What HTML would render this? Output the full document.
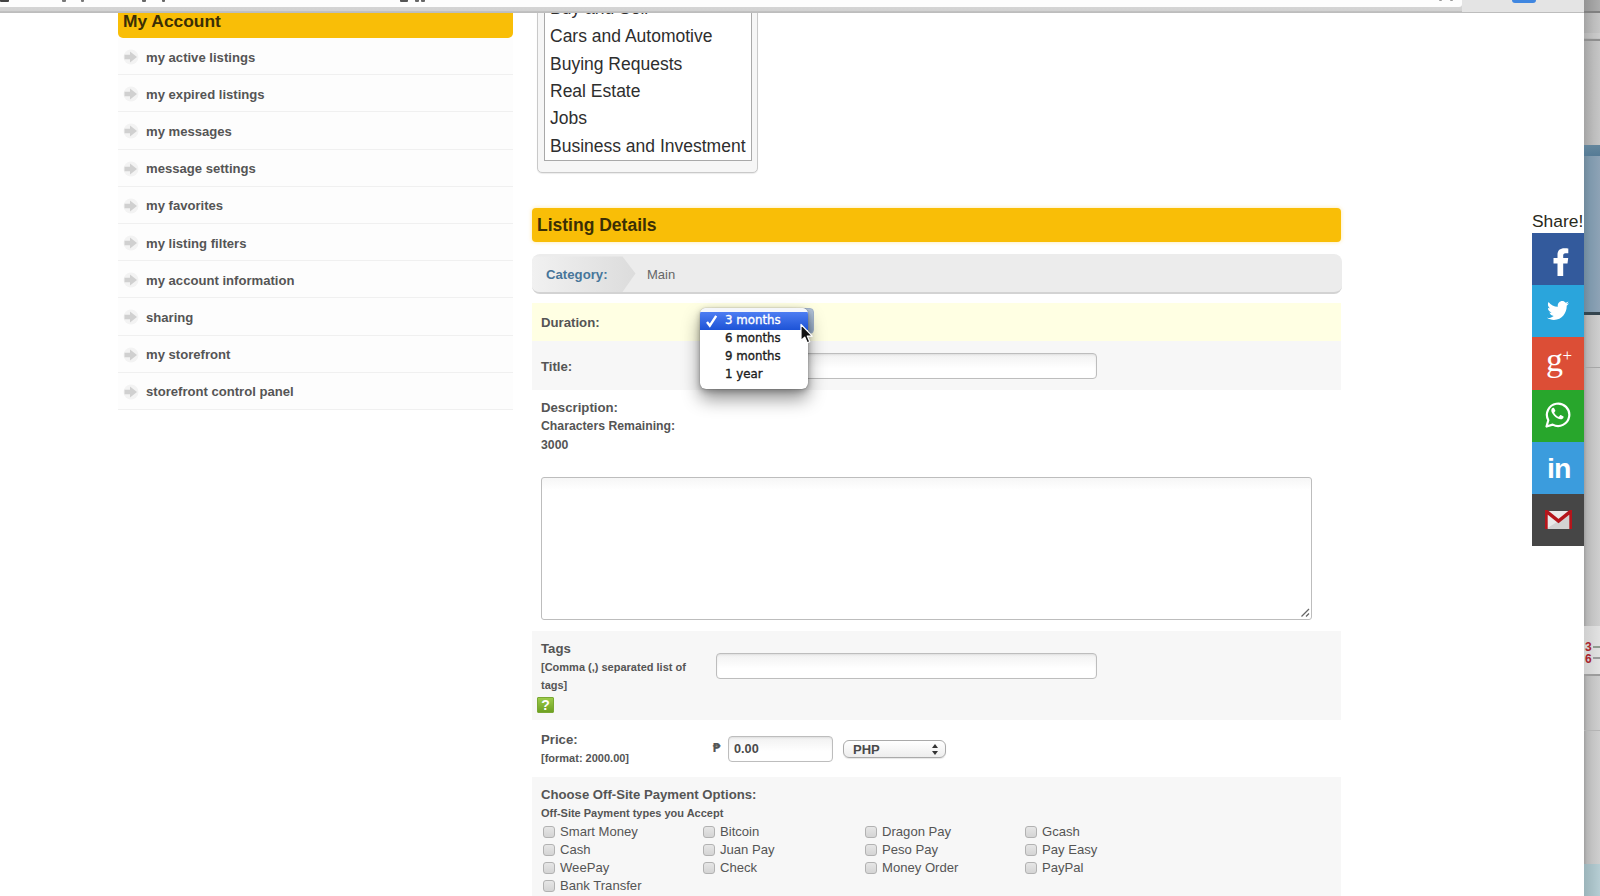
<!DOCTYPE html>
<html lang="en">
<head>
<meta charset="utf-8">
<title>Listing Details</title>
<style>
*{box-sizing:border-box;margin:0;padding:0}
html,body{width:1600px;height:896px;overflow:hidden;background:#fff}
body{position:relative;font-family:"Liberation Sans",Arial,Helvetica,sans-serif;color:#555;font-size:13px}
.abs{position:absolute}
/* browser chrome */
#chrome{left:0;top:0;width:1600px;height:13.200px;background:linear-gradient(#d8d8d8 0,#d2d2d2 10.500px,#b8b8b8 12px,#c4c4c4 13.200px)}
.mk{top:0;height:1.500px;background:#555;border-radius:0 0 1px 1px}
#chrome2{left:1462px;top:0;width:138px;height:11.5px;background:#e4e4e4}
#addr{left:0;top:0;width:1462px;height:6.5px;background:#fdfdfd;border-radius:0 0 3px 0}
#bluebtn{left:1512px;top:0;width:24px;height:3px;background:#3f86e0;border-radius:0 0 3px 3px}
#strip{left:1584px;top:0;width:16px;height:896px;background:linear-gradient(90deg,#a4a4a4 0,#afafaf 25%,#bcbcbc 60%,#c6c6c6 100%);overflow:hidden}
/* sidebar */
#acct{left:118px;top:13px;width:395px;height:25px;background:#f9be07;border-radius:0 0 5px 5px}
#acct span{position:absolute;left:5px;top:-2px;font-weight:bold;font-size:17.4px;color:#3b2f05;white-space:nowrap}
.nav{left:118px;width:395px;height:37.2px;border-bottom:1px solid #f0f0f0;background:#fdfdfd}
.nav span{position:absolute;left:28px;top:11.5px;font-weight:bold;font-size:13.1px;color:#555;white-space:nowrap;line-height:15px}
.nav svg{position:absolute;left:5px;top:11px}
/* category box */
#catouter{left:537px;top:-20px;width:221px;height:193px;border:1px solid #c9c9c9;border-radius:5px;background:#f6f6f6;box-shadow:0 1px 1px rgba(0,0,0,.08)}
#catinner{left:544px;top:-20px;width:208px;height:181px;border:1px solid #a9a9a9;background:#fff}
.opt{left:550px;font-size:17.5px;color:#2e2e2e;white-space:nowrap;line-height:22px}
/* listing details */
#ldh{left:532px;top:208px;width:809px;height:34px;background:#f9be07;border-radius:4px;box-shadow:0 0 4px rgba(249,190,7,.35)}
#ldh span{position:absolute;left:5px;top:6.5px;font-weight:bold;font-size:17.5px;color:#3b2f05;white-space:nowrap;line-height:21px}
#catbar{left:532px;top:254px;width:809.5px;height:40px;background:#ececec;border-radius:8px;border-bottom:2px solid #d3d3d3;overflow:hidden}
.row{left:532px;width:809px}
.lbl{font-weight:bold;color:#555;white-space:nowrap;line-height:15px}
.inp{border:1px solid #bdbdbd;border-radius:4px;background:linear-gradient(#f1f1f1,#fff 60%);box-shadow:inset 0 1px 2px rgba(0,0,0,.08)}
.cb{width:12px;height:12px;border:1px solid #b2b2b2;border-radius:3px;background:linear-gradient(#e6e6e6,#d4d4d4)}
.cl{font-size:13.1px;color:#555;white-space:nowrap;line-height:16px}
/* share */
.sh{left:1532px;width:52px;height:52.2px}
</style>
</head>
<body>

<!-- SIDEBAR -->
<div id="acct" class="abs"><span>My Account</span></div>
<div class="abs nav" style="top:38.0px"><svg width="16" height="16" viewBox="0 0 16 16"><circle cx="8" cy="8" r="7.500" fill="#f3f3f3"/><path d="M1.500 5.700h5.500V2.500l7 5.500-7 5.500v-3.200H1.500z" fill="#d0d0d0"/></svg><span>my active listings</span></div>
<div class="abs nav" style="top:75.2px"><svg width="16" height="16" viewBox="0 0 16 16"><circle cx="8" cy="8" r="7.500" fill="#f3f3f3"/><path d="M1.500 5.700h5.500V2.500l7 5.500-7 5.500v-3.200H1.500z" fill="#d0d0d0"/></svg><span>my expired listings</span></div>
<div class="abs nav" style="top:112.4px"><svg width="16" height="16" viewBox="0 0 16 16"><circle cx="8" cy="8" r="7.500" fill="#f3f3f3"/><path d="M1.500 5.700h5.500V2.500l7 5.500-7 5.500v-3.200H1.500z" fill="#d0d0d0"/></svg><span>my messages</span></div>
<div class="abs nav" style="top:149.6px"><svg width="16" height="16" viewBox="0 0 16 16"><circle cx="8" cy="8" r="7.500" fill="#f3f3f3"/><path d="M1.500 5.700h5.500V2.500l7 5.500-7 5.500v-3.200H1.500z" fill="#d0d0d0"/></svg><span>message settings</span></div>
<div class="abs nav" style="top:186.8px"><svg width="16" height="16" viewBox="0 0 16 16"><circle cx="8" cy="8" r="7.500" fill="#f3f3f3"/><path d="M1.500 5.700h5.500V2.500l7 5.500-7 5.500v-3.200H1.500z" fill="#d0d0d0"/></svg><span>my favorites</span></div>
<div class="abs nav" style="top:224.0px"><svg width="16" height="16" viewBox="0 0 16 16"><circle cx="8" cy="8" r="7.500" fill="#f3f3f3"/><path d="M1.500 5.700h5.500V2.500l7 5.500-7 5.500v-3.200H1.500z" fill="#d0d0d0"/></svg><span>my listing filters</span></div>
<div class="abs nav" style="top:261.2px"><svg width="16" height="16" viewBox="0 0 16 16"><circle cx="8" cy="8" r="7.500" fill="#f3f3f3"/><path d="M1.500 5.700h5.500V2.500l7 5.500-7 5.500v-3.200H1.500z" fill="#d0d0d0"/></svg><span>my account information</span></div>
<div class="abs nav" style="top:298.4px"><svg width="16" height="16" viewBox="0 0 16 16"><circle cx="8" cy="8" r="7.500" fill="#f3f3f3"/><path d="M1.500 5.700h5.500V2.500l7 5.500-7 5.500v-3.200H1.500z" fill="#d0d0d0"/></svg><span>sharing</span></div>
<div class="abs nav" style="top:335.6px"><svg width="16" height="16" viewBox="0 0 16 16"><circle cx="8" cy="8" r="7.500" fill="#f3f3f3"/><path d="M1.500 5.700h5.500V2.500l7 5.500-7 5.500v-3.200H1.500z" fill="#d0d0d0"/></svg><span>my storefront</span></div>
<div class="abs nav" style="top:372.8px"><svg width="16" height="16" viewBox="0 0 16 16"><circle cx="8" cy="8" r="7.500" fill="#f3f3f3"/><path d="M1.500 5.700h5.500V2.500l7 5.500-7 5.500v-3.200H1.500z" fill="#d0d0d0"/></svg><span>storefront control panel</span></div>

<!-- CATEGORY LIST -->
<div id="catouter" class="abs"></div>
<div id="catinner" class="abs"></div>
<div class="abs opt" style="top:-3px">Buy and Sell</div>
<div class="abs opt" style="top:25px">Cars and Automotive</div>
<div class="abs opt" style="top:52.5px">Buying Requests</div>
<div class="abs opt" style="top:79.5px">Real Estate</div>
<div class="abs opt" style="top:107px">Jobs</div>
<div class="abs opt" style="top:135px">Business and Investment</div>

<!-- LISTING DETAILS -->
<div id="ldh" class="abs"><span>Listing Details</span></div>

<div id="catbar" class="abs">
  <svg class="abs" style="left:0;top:0" width="110" height="38" viewBox="0 0 110 38"><defs><linearGradient id="cg" x1="0" x2="1"><stop offset="0" stop-color="#f1f1f1"/><stop offset="1" stop-color="#dcdcdc"/></linearGradient></defs><path d="M0 2.500h90.500l13 17-13 18.500H0z" fill="url(#cg)"/></svg>
  <span class="abs lbl" style="left:14px;top:13px;color:#47769a;font-size:13.2px">Category:</span>
  <span class="abs" style="left:115px;top:13px;color:#666;font-size:13px;line-height:15px">Main</span>
</div>
<!-- duration row -->
<div class="abs row" style="top:303px;height:38px;background:#ffffe3"></div>
<span class="abs lbl" style="left:541px;top:315px;font-size:13.2px">Duration:</span>
<!-- title row -->
<div class="abs row" style="top:341px;height:49px;background:#f7f7f7"></div>
<span class="abs lbl" style="left:541px;top:359px;font-size:13.2px">Title:</span>
<div class="abs inp" style="left:716px;top:353px;width:381px;height:26px"></div>
<!-- select peeking behind menu -->
<div class="abs" style="left:798px;top:307.5px;width:16px;height:26px;border-radius:4px;background:linear-gradient(#b4c4d9,#93a9c6);border:1px solid #a3b4cc"></div>
<!-- dropdown menu -->
<div id="menu" class="abs" style="left:700px;top:307.500px;width:107.500px;height:81.500px;background:#fff;border-radius:6px;box-shadow:0 10px 18px rgba(0,0,0,.42),0 2px 6px rgba(0,0,0,.28),0 0 1px rgba(0,0,0,.5);font-family:'DejaVu Sans','Liberation Sans',sans-serif;font-size:11.800px;color:#1c1c1c;-webkit-text-stroke:0.350px currentColor;overflow:hidden">
  <div class="abs" style="left:0;top:0;width:108px;height:5px;background:#f4f6fa"></div>
  <div class="abs" style="left:0;top:4.500px;width:108px;height:17.500px;background:linear-gradient(#4d7df2,#1d53d6)"></div>
  <svg class="abs" style="left:5px;top:6px" width="14" height="14" viewBox="0 0 14 14"><path d="M2 8l2.800 3.700L11.200 1.800" fill="none" stroke="#fff" stroke-width="2.400"/></svg>
  <span class="abs" style="left:25px;top:5px;color:#fff;white-space:nowrap;line-height:15px">3 months</span>
  <span class="abs" style="left:25px;top:23.300px;white-space:nowrap;line-height:15px">6 months</span>
  <span class="abs" style="left:25px;top:41.500px;white-space:nowrap;line-height:15px">9 months</span>
  <span class="abs" style="left:25px;top:59.500px;white-space:nowrap;line-height:15px">1 year</span>
</div>
<!-- cursor -->
<svg class="abs" style="left:799px;top:323px" width="16" height="22" viewBox="0 0 16 22"><path d="M2 1.5v16l3.7-3.4 2.5 5.7 2.6-1.1-2.5-5.6h5z" fill="#111" stroke="#fff" stroke-width="1.2" stroke-linejoin="round"/></svg>
<!-- description -->
<span class="abs lbl" style="left:541px;top:400px;font-size:13.2px">Description:</span>
<span class="abs lbl" style="left:541px;top:419px;font-size:12.25px">Characters Remaining:</span>
<span class="abs lbl" style="left:541px;top:438px;font-size:12.25px">3000</span>
<div class="abs" style="left:541px;top:477px;width:771px;height:143px;border:1px solid #bdbdbd;border-radius:3px;background:linear-gradient(#f6f6f6,#fff 12px);"></div>
<svg class="abs" style="left:1300px;top:608px" width="10" height="10" viewBox="0 0 10 10"><path d="M9 1L1.500 8.500M9 5.500L6 8.500" stroke="#666" stroke-width="1.300" fill="none"/></svg>
<!-- tags row -->
<div class="abs row" style="top:631px;height:89px;background:#f7f7f7"></div>
<span class="abs lbl" style="left:541px;top:641px;font-size:13.2px">Tags</span>
<span class="abs lbl" style="left:541px;top:660px;font-size:11px">[Comma (,) separated list of</span>
<span class="abs lbl" style="left:541px;top:678px;font-size:11px">tags]</span>
<div class="abs" style="left:537px;top:697px;width:17px;height:16px;background:linear-gradient(#9ccb4a,#6ea022);border:1px solid #7aa833;color:#fff;font-weight:bold;font-size:14px;line-height:14px;text-align:center;border-radius:1px">?</div>
<div class="abs inp" style="left:716px;top:653px;width:381px;height:26px"></div>
<!-- price row -->
<span class="abs lbl" style="left:541px;top:732px;font-size:13.2px">Price:</span>
<span class="abs lbl" style="left:541px;top:751px;font-size:11px">[format: 2000.00]</span>
<span class="abs" style="left:712.500px;top:740.500px;font-size:11.500px;font-weight:bold;color:#555;line-height:14px;font-family:'DejaVu Sans',sans-serif">&#8369;</span>
<div class="abs inp" style="left:728px;top:736px;width:105px;height:26px"><span class="abs" style="left:5px;top:5px;font-size:12.7px;font-weight:bold;color:#4a4a4a;line-height:15px">0.00</span></div>
<div class="abs" style="left:843px;top:740px;width:103px;height:18px;border:1px solid #aaa;border-radius:6px;background:linear-gradient(#fff,#ededed);box-shadow:0 1px 1px rgba(0,0,0,.1)"><span class="abs" style="left:9px;top:1px;font-size:13px;font-weight:bold;color:#4a4a4a;line-height:15px">PHP</span>
<svg class="abs" style="left:87px;top:3px" width="8" height="11" viewBox="0 0 8 11"><path d="M4 0l3 4H1zM4 11l3-4H1z" fill="#333"/></svg></div>
<!-- payment row -->
<div class="abs row" style="top:776.5px;height:121px;background:#f7f7f7"></div>
<span class="abs lbl" style="left:541px;top:787px;font-size:13.15px">Choose Off-Site Payment Options:</span>
<span class="abs lbl" style="left:541px;top:806px;font-size:11px">Off-Site Payment types you Accept</span>
<div class="abs cb" style="left:543px;top:826px"></div><span class="abs cl" style="left:560px;top:824px">Smart Money</span>
<div class="abs cb" style="left:543px;top:844px"></div><span class="abs cl" style="left:560px;top:842px">Cash</span>
<div class="abs cb" style="left:543px;top:862px"></div><span class="abs cl" style="left:560px;top:860px">WeePay</span>
<div class="abs cb" style="left:543px;top:880px"></div><span class="abs cl" style="left:560px;top:878px">Bank Transfer</span>
<div class="abs cb" style="left:703px;top:826px"></div><span class="abs cl" style="left:720px;top:824px">Bitcoin</span>
<div class="abs cb" style="left:703px;top:844px"></div><span class="abs cl" style="left:720px;top:842px">Juan Pay</span>
<div class="abs cb" style="left:703px;top:862px"></div><span class="abs cl" style="left:720px;top:860px">Check</span>
<div class="abs cb" style="left:865px;top:826px"></div><span class="abs cl" style="left:882px;top:824px">Dragon Pay</span>
<div class="abs cb" style="left:865px;top:844px"></div><span class="abs cl" style="left:882px;top:842px">Peso Pay</span>
<div class="abs cb" style="left:865px;top:862px"></div><span class="abs cl" style="left:882px;top:860px">Money Order</span>
<div class="abs cb" style="left:1025px;top:826px"></div><span class="abs cl" style="left:1042px;top:824px">Gcash</span>
<div class="abs cb" style="left:1025px;top:844px"></div><span class="abs cl" style="left:1042px;top:842px">Pay Easy</span>
<div class="abs cb" style="left:1025px;top:862px"></div><span class="abs cl" style="left:1042px;top:860px">PayPal</span>



<span class="abs" style="left:1532px;top:211px;font-size:17.4px;color:#2a2a1a;line-height:20px;white-space:nowrap">Share!</span>
<div class="abs" style="left:1532px;top:232.5px;width:52px;height:313px;background:linear-gradient(#335a9c 0,#335a9c 52.200px,#2aa5dc 52.200px,#2aa5dc 104.400px,#dc4e36 104.400px,#dc4e36 156.600px,#28a62c 156.600px,#28a62c 208.800px,#3b9cdd 208.800px,#3b9cdd 261px,#464646 261px)"></div>
<svg class="abs" style="left:1549px;top:245px" width="24" height="32" viewBox="0 0 24 32"><path d="M8.500 31V18.500H4.500V13h4V9.800C8.500 5.300 11 3.200 15.500 3.200c1.900 0 3.300.2 3.800.3V8.300h-2.700c-2 0-2.400 1-2.400 2.400V13h5l-.7 5.500h-4.300V31z" fill="#fff"/></svg>
<svg class="abs" style="left:1547px;top:301px" width="22" height="19.500" viewBox="0 0 24 20" preserveAspectRatio="none"><path d="M24 2.400c-.9.400-1.800.700-2.800.800 1-.6 1.800-1.600 2.200-2.700-1 .6-2 1-3.100 1.200C19.300.700 18 0 16.600 0c-2.700 0-4.900 2.200-4.900 4.900 0 .4 0 .8.100 1.100C7.700 5.800 4.100 3.900 1.700.9 1.200 1.700 1 2.500 1 3.400c0 1.700.9 3.200 2.200 4.100-.8 0-1.600-.2-2.200-.6v.1c0 2.400 1.700 4.400 3.900 4.800-.4.100-.8.200-1.300.2-.3 0-.6 0-.9-.1.600 2 2.400 3.400 4.600 3.400-1.700 1.300-3.800 2.100-6.100 2.100-.4 0-.8 0-1.200-.1 2.200 1.400 4.800 2.200 7.500 2.200 9.100 0 14-7.500 14-14v-.6c1-.7 1.800-1.600 2.500-2.500z" fill="#fff"/></svg>
<span class="abs" style="left:1546px;top:342px;font-family:'Liberation Serif','DejaVu Serif',serif;font-size:34px;line-height:36px;color:#fff">g</span>
<span class="abs" style="left:1562.500px;top:346px;font-family:'Liberation Serif','DejaVu Serif',serif;font-size:17px;line-height:20px;color:#fff">+</span>
<svg class="abs" style="left:1545px;top:401px" width="27" height="27" viewBox="0 0 27 27"><path d="M1.500 25.500l1.800-6.300A11.200 11.200 0 1 1 7.700 23.600z" fill="none" stroke="#fff" stroke-width="2.200" stroke-linejoin="round"/><path d="M9.300 7.600c-.4-.8-.7-.8-1.100-.8-.9 0-1.900 1-1.900 2.700 0 1.600 1.200 3.400 2.800 5.200 2 2.200 4.500 3.600 6.500 3.600 1.500 0 2.700-.9 2.900-1.900.1-.4.100-.8 0-.9l-2.700-1.400c-.3-.1-.5-.1-.7.200l-1 1.300c-.2.200-.4.300-.7.100-1.500-.6-3.300-2.200-4.100-3.800-.1-.3-.1-.5.100-.7l.8-1c.2-.2.200-.5.100-.7z" fill="#fff"/></svg>
<span class="abs" style="left:1547px;top:452.500px;font-size:28.500px;font-weight:bold;line-height:30px;color:#fff;letter-spacing:-1px">in</span>
<svg class="abs" style="left:1545px;top:510px" width="27" height="20" viewBox="0 0 27 20"><rect x="1" y="1" width="25" height="18" fill="#e9e9e9"/><path d="M13.500 11L26 1v18H1z" fill="#d2d2d2"/><path d="M1 19V1l12.500 10L26 1v18" fill="none" stroke="#b5151b" stroke-width="3.400"/></svg>

<div id="chrome" class="abs"></div>
<div id="chrome2" class="abs"></div>
<div id="addr" class="abs"></div>
<div id="bluebtn" class="abs"></div>
<div class="abs mk" style="left:0px;width:9px;background:#444"></div><div class="abs mk" style="left:62px;width:4px;background:#777"></div><div class="abs mk" style="left:81px;width:3px;background:#777"></div><div class="abs mk" style="left:142px;width:4px;background:#666"></div><div class="abs mk" style="left:162px;width:3px;background:#666"></div><div class="abs mk" style="left:400px;width:8px;background:#555"></div><div class="abs mk" style="left:415px;width:4px;background:#666"></div><div class="abs mk" style="left:421px;width:4px;background:#666"></div><div class="abs mk" style="left:1439px;width:3px;height:1px;background:#999"></div><div class="abs mk" style="left:1450px;width:3px;height:1px;background:#999"></div>
<div id="strip" class="abs">
 <div class="abs" style="left:0;top:0;width:16px;height:12px;background:linear-gradient(90deg,#949494,#adadad)"></div>
 <div class="abs" style="left:0;top:11px;width:16px;height:2px;background:#808080"></div>
 <div class="abs" style="left:0;top:33px;width:16px;height:5px;background:rgba(255,255,255,.12)"></div>
 <div class="abs" style="left:0;top:39px;width:16px;height:2px;background:#8e8e8e"></div>
 <div class="abs" style="left:0;top:145px;width:16px;height:168px;background:linear-gradient(90deg,#708a9c,#7f99ad 40%,#8ea3b6)"></div>
 <div class="abs" style="left:0;top:145px;width:16px;height:11px;background:linear-gradient(#64869c,#557b96)"></div>
 <div class="abs" style="left:0;top:312px;width:16px;height:2.500px;background:#34454f"></div>
 <div class="abs" style="left:0;top:314.500px;width:16px;height:582px;background:linear-gradient(90deg,#a0a0a0 0,#b6b6b6 18%,#c3c3c3 50%,#cfcfcf 100%)"></div>
 <div class="abs" style="left:0;top:367px;width:16px;height:1px;background:#a6a6a6"></div>
 <div class="abs" style="left:0;top:626px;width:16px;height:48px;background:linear-gradient(90deg,#cfcfcf,#e2e2e2)"></div>
 <div class="abs" style="left:0;top:674px;width:16px;height:1.500px;background:#9c9c9c"></div>
 <span class="abs" style="left:1px;top:641px;font-size:12px;font-weight:bold;color:#a8242c;line-height:12px">3</span>
 <span class="abs" style="left:1px;top:652.500px;font-size:12px;font-weight:bold;color:#a8242c;line-height:12px">6</span>
 <div class="abs" style="left:9px;top:646px;width:7px;height:2px;background:#8f9a8f"></div>
 <div class="abs" style="left:9px;top:657px;width:7px;height:2px;background:#9a9a9a"></div>
 <div class="abs" style="left:0;top:730px;width:16px;height:1px;background:#b4b4b4"></div>
 <div class="abs" style="left:0;top:864px;width:16px;height:32px;background:linear-gradient(90deg,#9bb4ba,#b6cdd3)"></div>
</div>
</body>
</html>
